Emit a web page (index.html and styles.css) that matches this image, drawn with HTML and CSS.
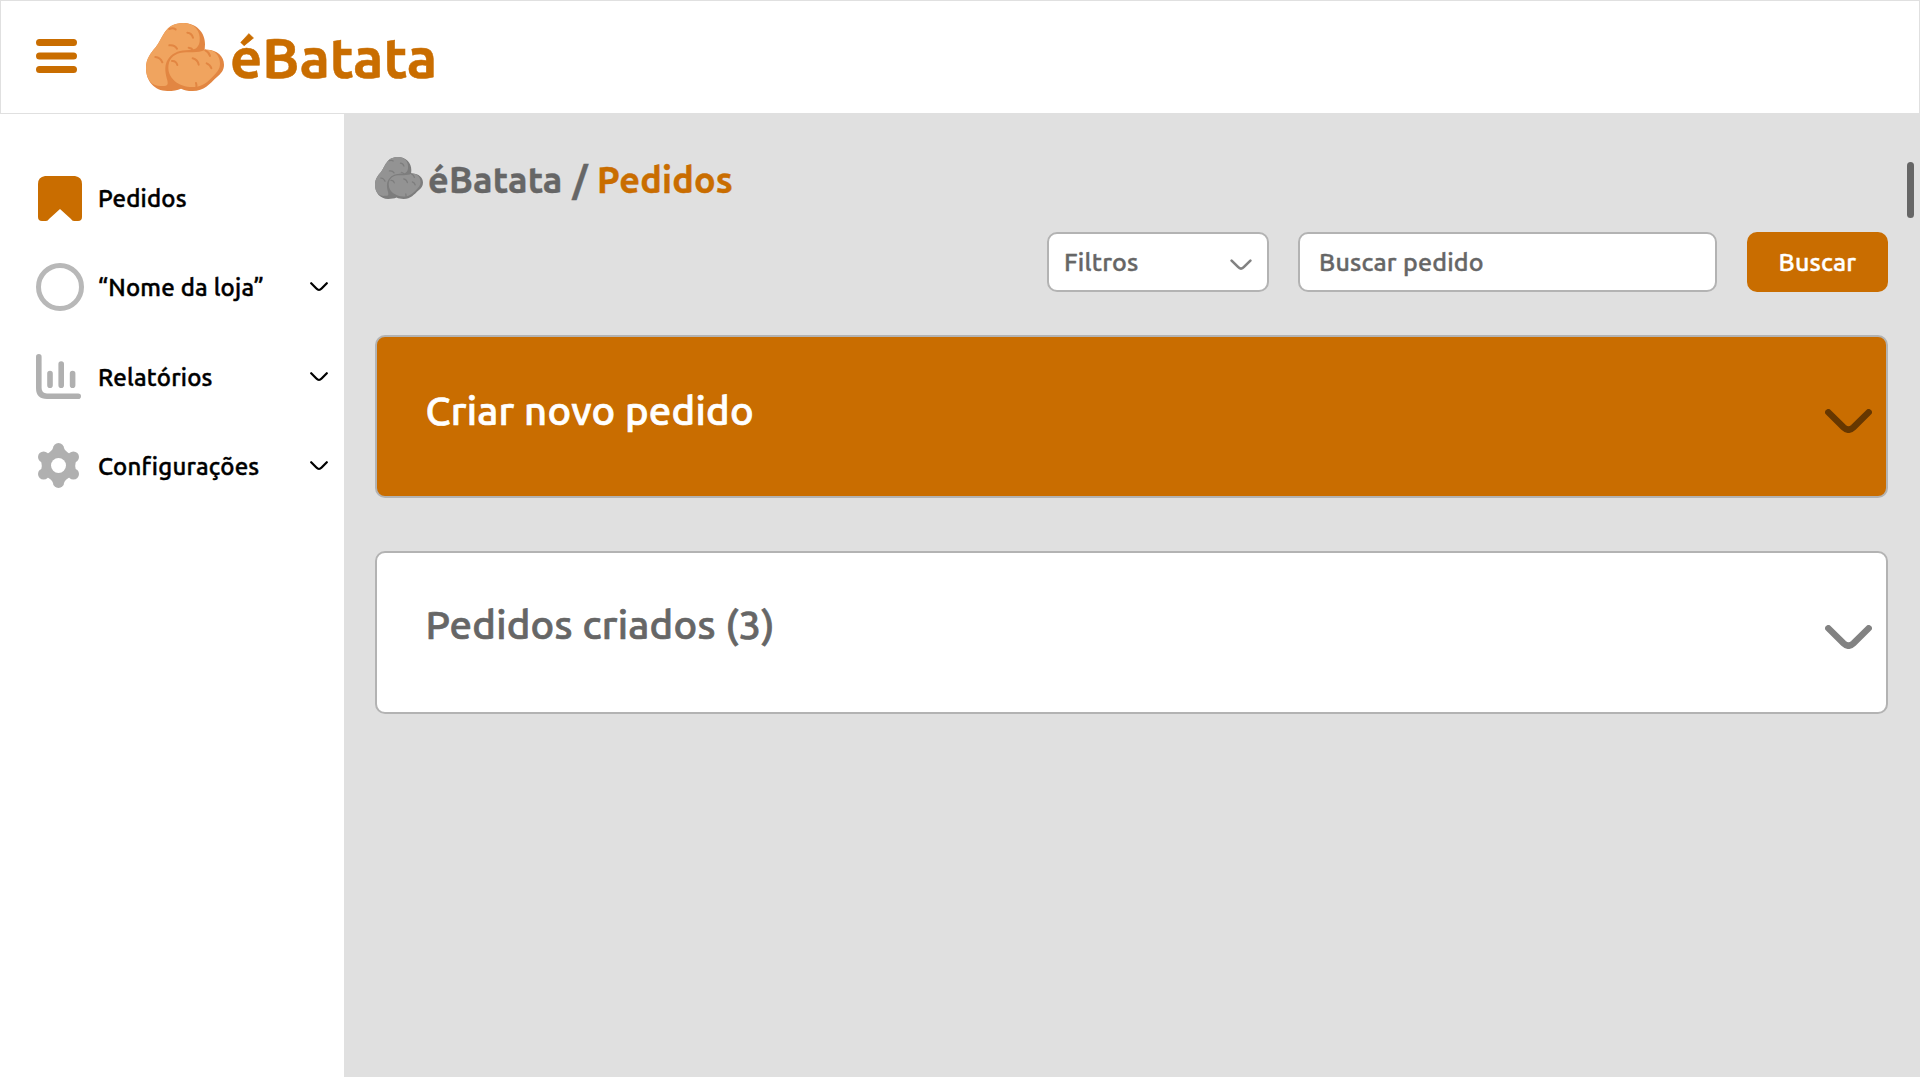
FILE: index.html
```html
<!DOCTYPE html>
<html lang="pt-BR">
<head>
<meta charset="utf-8">
<title>éBatata</title>
<link rel="stylesheet" href="styles.css">
</head>
<body>
<svg class="defs" width="0" height="0" aria-hidden="true">
  <symbol id="potato" viewBox="18 24 234 204">
    <path class="p-dark" d="M130 24C168 24 196 52 195 88L194 105C226 101 252 122 252 149C252 166 243 175 231 186C208 207 193 228 158 228C142 228 133 226 123 221C112 226 100 228 82 228C43 228 18 198 18 160C18 130 33 114 47 97C69 70 73 24 130 24Z"/>
    <path class="p-light" d="M130 24C164 24 182 48 179 78C178 91 170 103 157 104C130 105 108 107 92 123C78 137 74 153 77 175C79 190 84 197 83 206C82 212 75 213 66 213C51 214 40 210 31 200C22 190 18 176 18 160C18 130 33 114 47 97C69 70 73 24 130 24Z"/>
    <path class="p-light" d="M194 105C221 101 240 121 240 146C240 163 230 173 215 188C196 207 182 216 157 216C116 216 85 190 85 158C85 135 99 119 120 114C145 109 175 116 194 105Z"/>
    <path class="p-mark" d="M88 42Q98 37 107 43M142 53Q155 54 159 68M88 91Q104 89 111 101M146 98Q156 99 159 107M46 126Q61 127 67 142M96 138Q108 137 112 150M158 130Q173 134 176 149M200 145Q211 149 214 160M196 106Q208 112 210 123M168 204Q170 210 169 215"/>
  </symbol>
  <symbol id="chev-s" viewBox="0 0 18 10"><path d="M1.2 1.2L6.4 6.6Q9 9.4 11.6 6.6L16.8 1.2" fill="none" stroke="currentColor" stroke-width="2.2" stroke-linecap="round"/></symbol>
  <symbol id="chev-l" viewBox="0 0 47 24"><path d="M3.3 3.3L18.6 18.4Q23.5 23 28.4 18.4L43.7 3.3" fill="none" stroke="currentColor" stroke-width="6.4" stroke-linecap="round"/></symbol>
</svg>
<header class="topbar">
  <svg class="burger" viewBox="0 0 41 34"><path d="M3.5 3.5h34M3.5 17h34M3.5 30.5h34" stroke="currentColor" stroke-width="7" stroke-linecap="round"/></svg>
  <svg class="brand-icon"><use href="#potato"/></svg>
  <span class="brand">éBatata</span>
</header>
<div class="shell">
  <nav class="menu">
    <a class="item"><span class="ico"><svg class="bookmark" viewBox="0 0 44 45"><path d="M7 0H37Q44 1 44 8V41Q44 45 40 45H36Q34 45 33 43L22 33L11 43Q10 45 8 45H4Q0 45 0 41V8Q0 1 7 0Z" fill="#c96d00"/></svg></span><span class="label">Pedidos</span></a>
    <a class="item"><span class="ico"><span class="ring"></span></span><span class="label">“Nome da loja”</span><svg class="chev"><use href="#chev-s"/></svg></a>
    <a class="item reports"><span class="ico"><svg class="chart" viewBox="0 0 45 45"><path d="M2.8 2.8V34Q2.8 42.2 11 42.2H42.2M14 19.5V31.3M25.2 10V31.3M36.6 19.5V31.3" fill="none" stroke="#b0b0b0" stroke-width="5.6" stroke-linecap="round"/></svg></span><span>Relatórios</span><svg class="chev"><use href="#chev-s"/></svg></a>
    <a class="item"><span class="ico"><svg class="gear" viewBox="0 0 41 45"><g fill="#b0b0b0"><path d="M14.8 5.6L20.5 4L26.2 5.6Q27 8 32 11L38 17Q36.5 22.5 38 28L32 34Q27 37 26.2 39.4L20.5 41L14.8 39.4Q14 37 9 34L3 28Q4.5 22.5 3 17L9 11Q14 8 14.8 5.6Z"/><circle cx="20.5" cy="5.6" r="5.6"/><circle cx="20.5" cy="39.4" r="5.6"/><circle cx="5.6" cy="14" r="5.6"/><circle cx="35.4" cy="14" r="5.6"/><circle cx="5.6" cy="31" r="5.6"/><circle cx="35.4" cy="31" r="5.6"/></g><circle cx="20.5" cy="22.5" r="7.5" fill="#fff"/></svg></span><span class="label">Configurações</span><svg class="chev"><use href="#chev-s"/></svg></a>
  </nav>
  <main class="main">
    <h1 class="crumb"><svg class="crumb-icon"><use href="#potato"/></svg><span>éBatata</span><span class="slash">/</span><span class="current">Pedidos</span></h1>
    <div class="tools">
      <div class="field select"><span>Filtros</span><svg class="chev-m" viewBox="0 0 22 12"><path d="M1.6 1.6L8 7.9Q11 11.3 14 7.9L20.4 1.6" fill="none" stroke="#828282" stroke-width="2.6" stroke-linecap="round"/></svg></div>
      <div class="field search"><span>Buscar pedido</span></div>
      <div class="btn"><span>Buscar</span></div>
    </div>
    <section class="card primary"><h2>Criar novo pedido</h2><svg class="chev-l"><use href="#chev-l"/></svg></section>
    <section class="card"><h2>Pedidos criados (3)</h2><svg class="chev-l"><use href="#chev-l"/></svg></section>
    <div class="scroll"></div>
  </main>
</div>
</body>
</html>
```
FILE: styles.css
```css
* { box-sizing: border-box; }
body { margin: 0; height: 1080px; overflow: hidden; background: #fff; font-family: Ubuntu, "Noto Sans", sans-serif; color: #000; }
svg { display: block; flex: none; }
.defs { position: absolute; }
h1, h2 { margin: 0; }
span, h2 { white-space: nowrap; }
.p-dark { fill: #e28642; }
.p-light { fill: #f0a45f; }
.p-mark { fill: none; stroke: #e28642; stroke-width: 6; stroke-linecap: round; }
.topbar { height: 114px; border: 1px solid #e0e0e0; display: flex; align-items: flex-start; padding-left: 35px; color: #c96d00; }
.burger { width: 41px; height: 34px; margin-top: 38px; }
.brand-icon { width: 78px; height: 68px; margin: 22px 0 0 69px; }
.brand { margin: 17px 0 0 6px; font-size: 56px; line-height: 80px; font-weight: 700; -webkit-text-stroke: .5px currentColor; }
.shell { display: flex; height: 963px; }
.menu { width: 344px; padding: 39px 16px 0 36px; }
.item { display: flex; align-items: center; height: 89.3px; font-size: 24px; font-weight: 500; letter-spacing: .2px; -webkit-text-stroke: .45px currentColor; }
.label { padding-top: 2px; }
.reports { padding-top: 2px; }
.ico { width: 62px; display: flex; flex: none; }
.bookmark { width: 44px; height: 45px; margin: 2px 0 0 2px; }
.ring { width: 48px; height: 48px; border: 5px solid #b8b8b8; border-radius: 50%; }
.chart { width: 45px; height: 45px; margin-bottom: 2px; }
.gear { width: 41px; height: 45px; margin-left: 2px; }
.chev { width: 18px; height: 10px; margin-left: auto; }
.main { position: relative; width: 1576px; background: #e0e0e0; padding: 43px 32px 0 31px; }
.crumb { display: flex; height: 75px; font-size: 36px; line-height: 46px; letter-spacing: .2px; -webkit-text-stroke: .4px currentColor; color: #666; }
.crumb-icon { width: 48px; height: 42px; margin-right: 5px; filter: grayscale(1) brightness(.84); }
.slash { margin: 0 9px 0 10px; }
.current { color: #c96d00; }
.tools { display: flex; justify-content: flex-end; height: 60px; font-size: 25px; font-weight: 500; letter-spacing: .22px; -webkit-text-stroke: .4px currentColor; color: #666; }
.field { display: flex; align-items: center; background: #fff; border: 2px solid #b3b3b3; border-radius: 10px; }
.select { width: 222px; padding: 0 15px 0 15px; justify-content: space-between; margin-right: 29px; }
.search { width: 419px; padding-left: 19px; margin-right: 30px; }
.btn { width: 141px; display: flex; align-items: center; justify-content: center; background: #c96d00; border-radius: 10px; color: #fff; }
.chev-m { width: 22px; height: 12px; margin-top: 5px; }
.card { display: flex; justify-content: space-between; height: 163px; margin-top: 43px; padding: 0 14px 0 48.5px; border: 2px solid #b3b3b3; border-radius: 10px; background: #fff; color: #666; }
.card + .card { margin-top: 53px; }
.card h2 { margin-top: 44px; font-size: 40px; line-height: 56px; font-weight: 500; letter-spacing: .25px; -webkit-text-stroke: .7px currentColor; }
.chev-l { width: 47px; height: 24px; margin-top: 72px; color: #828282; }
.primary { background: #c96d00; color: #fff; }
.card.primary h2 { margin-top: 46px; }
.primary .chev-l { color: #663700; }
.scroll { position: absolute; right: 6px; top: 48px; width: 7px; height: 56px; border-radius: 4px; background: #666; }
```
